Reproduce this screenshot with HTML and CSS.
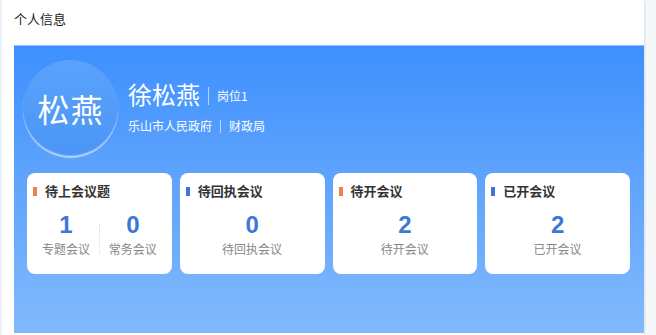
FILE: index.html
```html
<!DOCTYPE html>
<html lang="zh-CN">
<head>
    <meta charset="UTF-8">
    <meta name="viewport" content="width=device-width, initial-scale=1.0">
    <link rel="stylesheet" href="styles.css">
    <title>个人信息</title>
</head>
<body>
    <div class="card">
        <div class="card-title">个人信息</div>
        <div class="panel">
            <div class="profile">
                <div class="avatar">松燕</div>
                <div class="info">
                    <div class="name-row">
                        <span class="name">徐松燕</span>
                        <span class="post">岗位1</span>
                    </div>
                    <div class="org-row">
                        <span>乐山市人民政府</span>
                        <span class="org-sep"></span>
                        <span>财政局</span>
                    </div>
                </div>
            </div>
            <div class="stats">
                <div class="stat">
                    <div class="stat-title"><i class="mark orange"></i>待上会议题</div>
                    <div class="stat-body">
                        <div class="cell">
                            <div class="num">1</div>
                            <div class="label">专题会议</div>
                        </div>
                        <div class="divider"></div>
                        <div class="cell">
                            <div class="num">0</div>
                            <div class="label">常务会议</div>
                        </div>
                    </div>
                </div>
                <div class="stat">
                    <div class="stat-title"><i class="mark blue"></i>待回执会议</div>
                    <div class="stat-body">
                        <div class="cell">
                            <div class="num">0</div>
                            <div class="label">待回执会议</div>
                        </div>
                    </div>
                </div>
                <div class="stat">
                    <div class="stat-title"><i class="mark orange"></i>待开会议</div>
                    <div class="stat-body">
                        <div class="cell">
                            <div class="num">2</div>
                            <div class="label">待开会议</div>
                        </div>
                    </div>
                </div>
                <div class="stat">
                    <div class="stat-title"><i class="mark blue"></i>已开会议</div>
                    <div class="stat-body">
                        <div class="cell">
                            <div class="num">2</div>
                            <div class="label">已开会议</div>
                        </div>
                    </div>
                </div>
            </div>
        </div>
    </div>
</body>
</html>
```

FILE: styles.css
```css
html, body {
    margin: 0;
    height: 100%;
}
body {
    background-color: #f6f7f9;
    font-family: "Noto Sans CJK SC", "Noto Sans", sans-serif;
    color: #333333;
    border-left: 2px solid #eaf1fb;
    box-sizing: border-box;
    overflow: hidden;
}
.card {
    width: 644px;
    height: 100%;
    background: #ffffff;
    border-radius: 4px 4px 0 0;
    box-sizing: border-box;
    padding: 0 0 2px 12px;
    border-right: 2px solid #e4ebf5;
}
.card-title {
    font-size: 13px;
    line-height: 16px;
    padding: 11px 0 0 0;
    height: 45px;
    box-sizing: border-box;
    color: #222222;
}
.panel {
    height: 288px;
    background: linear-gradient(180deg, #3d90fe 0%, #5ea3fd 45%, #82b9fc 100%);
    border-top: 1px solid #8ec0fd;
    box-sizing: border-box;
}
.profile {
    display: flex;
    align-items: flex-start;
    height: 127px;
    padding: 14px 0 0 9px;
    box-sizing: border-box;
}
.avatar {
    width: 95px;
    height: 96px;
    border-radius: 50%;
    background: linear-gradient(180deg, #5aa2fb 0%, #4b96f6 100%);
    box-shadow: 0 2px 1px rgba(255, 255, 255, 0.55), inset 0 -1px 0 rgba(255, 255, 255, 0.25);
    color: #ffffff;
    font-size: 32px;
    display: flex;
    align-items: center;
    justify-content: center;
    letter-spacing: 1px;
}
.info {
    padding: 18px 0 0 10px;
    color: #ffffff;
}
.name-row {
    display: flex;
    align-items: center;
    height: 32px;
}
.name {
    font-size: 24px;
    line-height: 32px;
}
.post {
    font-size: 12px;
    margin-left: 8px;
    padding-left: 8px;
    border-left: 1px solid rgba(255, 255, 255, 0.6);
    line-height: 18px;
    margin-top: 4px;
}
.org-row {
    display: flex;
    align-items: center;
    font-size: 12px;
    margin-top: 8px;
    line-height: 16px;
}
.org-sep {
    width: 1px;
    height: 13px;
    background: rgba(255, 255, 255, 0.6);
    margin: 0 8px;
}
.stats {
    display: flex;
    gap: 8px;
    padding: 0 14px 0 13px;
}
.stat {
    flex: 1;
    height: 101px;
    background: #ffffff;
    border-radius: 8px;
    box-sizing: border-box;
    padding: 9px 6px 0 6px;
}
.stat-title {
    display: flex;
    align-items: center;
    font-size: 13px;
    font-weight: bold;
    line-height: 18px;
    color: #333333;
}
.mark {
    width: 4px;
    height: 9px;
    margin-right: 8px;
}
.mark.orange {
    background: #f0804a;
}
.mark.blue {
    background: #3d75dc;
}
.stat-body {
    display: flex;
    align-items: flex-start;
    margin-top: 10px;
}
.cell {
    flex: 1;
    text-align: center;
}
.num {
    font-family: "Liberation Sans", Arial, sans-serif;
    font-size: 24px;
    font-weight: bold;
    color: #3c78d8;
    line-height: 30px;
}
.label {
    font-size: 12px;
    color: #888888;
    line-height: 18px;
}
.divider {
    width: 0;
    height: 30px;
    border-left: 1px dotted #e0dcd4;
    margin-top: 14px;
}
```
